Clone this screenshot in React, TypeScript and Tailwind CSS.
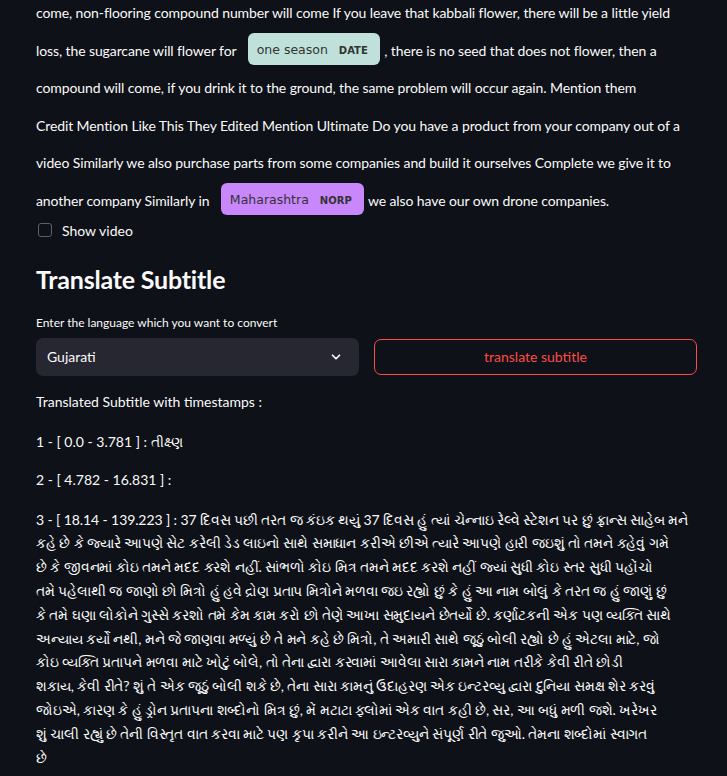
import { ChevronDown } from "lucide-react";

const font = { fontFamily: "Lato, 'Noto Sans', sans-serif" };

function Chip({ text, label, color }: { text: string; label: string; color: string }) {
  return (
    <span
      className={`ml-[8px] mr-[1px] inline-block h-[32px] rounded-[6px] px-[9px] align-[2px] leading-[32px] tracking-normal text-[#333] ${color}`}
      style={{ fontFamily: "'DejaVu Sans', sans-serif" }}
    >
      <span className="text-[12.5px]">{text}</span>
      <span className="ml-[11px] mr-[3px] text-[10px] font-bold">{label}</span>
    </span>
  );
}

const gujarati = [
  "3 - [ 18.14 - 139.223 ] : 37 દિવસ પછી તરત જ કંઇક થયું 37 દિવસ હું ત્યાં ચેન્નાઇ રેલ્વે સ્ટેશન પર છું ફ્રાન્સ સાહેબ મને",
  "કહે છે કે જ્યારે આપણે સેટ કરેલી ડેડ લાઇનો સાથે સમાધાન કરીએ છીએ ત્યારે આપણે હારી જઇશું તો તમને કહેવું ગમે",
  "છે કે જીવનમાં કોઇ તમને મદદ કરશે નહીં. સાંભળો કોઇ મિત્ર તમને મદદ કરશે નહીં જ્યાં સુધી કોઇ સ્તર સુધી પહોંચો",
  "તમે પહેલાથી જ જાણો છો મિત્રો હું હવે દ્રોણ પ્રતાપ મિત્રોને મળવા જઇ રહ્યો છું કે હું આ નામ બોલું કે તરત જ હું જાણું છું",
  "કે તમે ઘણા લોકોને ગુસ્સે કરશો તમે કેમ કામ કરો છો તેણે આખા સમુદાયને છેતર્યો છે. કર્ણાટકની એક પણ વ્યક્તિ સાથે",
  "અન્યાય કર્યો નથી, મને જે જાણવા મળ્યું છે તે મને કહે છે મિત્રો, તે અમારી સાથે જૂઠું બોલી રહ્યો છે હું એટલા માટે, જો",
  "કોઇ વ્યક્તિ પ્રતાપને મળવા માટે ખોટું બોલે, તો તેના દ્વારા કરવામાં આવેલા સારા કામને નામ તરીકે કેવી રીતે છોડી",
  "શકાય, કેવી રીતે? શું તે એક જૂઠું બોલી શકે છે, તેના સારા કામનું ઉદાહરણ એક ઇન્ટરવ્યુ દ્વારા દુનિયા સમક્ષ શેર કરવું",
  "જોઇએ, કારણ કે હું ડ્રોન પ્રતાપના શબ્દોનો મિત્ર છું, મેં મટાટા ફ્લોમાં એક વાત કહી છે, સર, આ બધું મળી જશે. ખરેખર",
  "શું ચાલી રહ્યું છે તેની વિસ્તૃત વાત કરવા માટે પણ કૃપા કરીને આ ઇન્ટરવ્યુને સંપૂર્ણ રીતે જુઓ. તેમના શબ્દોમાં સ્વાગત",
  "છે",
];

export default function App() {
  return (
    <div className="h-[776px] overflow-hidden bg-[#0e1117] text-[#fafafa]" style={font}>
      <div className="pl-[36px] pr-[30px]">
        {/* annotated transcript */}
        <p className="mt-[-6px] text-[14px] leading-[37.6px] tracking-[-0.1px]">
          come, non-flooring compound number will come If you leave that kabbali flower, there will be a little yield
          <br />
          loss, the sugarcane will flower for{" "}
          <Chip text="one season" label="DATE" color="bg-[#bfe1d9]" /> , there is no seed that does not flower, then a
          <br />
          compound will come, if you drink it to the ground, the same problem will occur again. Mention them
          <br />
          Credit Mention Like This They Edited Mention Ultimate Do you have a product from your company out of a
          <br />
          video Similarly we also purchase parts from some companies and build it ourselves Complete we give it to
          <br />
          another company Similarly in{" "}
          <Chip text="Maharashtra" label="NORP" color="bg-[#c887fb]" /> we also have our own drone companies.
        </p>

        <label className="ml-[2px] flex items-center gap-[10px] text-[14px]">
          <span className="h-[14px] w-[14px] rounded-[3px] border border-[#5c5f68] bg-[#0e1117]" />
          <span>Show video</span>
        </label>

        <h2 className="mt-[22px] text-[25px] font-bold leading-[32px] tracking-[-0.2px]">Translate Subtitle</h2>

        <div className="mt-[20px] text-[12px] leading-[16px]">Enter the language which you want to convert</div>

        <div className="mt-[7px] grid grid-cols-2 gap-[15px]">
          <div className="flex h-[38px] items-center justify-between rounded-[7px] bg-[#262730] pl-[11px] pr-[16px] text-[14px]">
            <span>Gujarati</span>
            <ChevronDown size={14} strokeWidth={3} color="#fafafa" />
          </div>
          <div className="flex h-[36px] items-center justify-center self-center rounded-[7px] border border-[#ff4b4b] text-[14px] text-[#ff4b4b]">
            translate subtitle
          </div>
        </div>

        <div className="mt-[16px] text-[14px] leading-[20px]">Translated Subtitle with timestamps :</div>
        <div className="mt-[20px] text-[14px] leading-[20px]">1 - [ 0.0 - 3.781 ] : તીક્ષ્ણ</div>
        <div className="mt-[18px] text-[14px] leading-[20px]">2 - [ 4.782 - 16.831 ] :</div>
        <div className="mt-[18px] text-[14px] leading-[23.8px] tracking-[-0.1px]">
          {gujarati.map((l, i) => (
            <div key={i} className="whitespace-nowrap">
              {l}
            </div>
          ))}
        </div>
      </div>
    </div>
  );
}
